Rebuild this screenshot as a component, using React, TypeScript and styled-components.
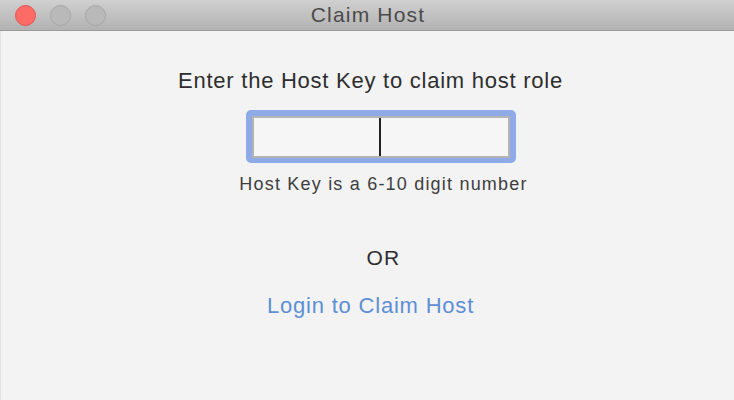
import React from "react";
import styled, { createGlobalStyle } from "styled-components";

const Global = createGlobalStyle`
  html, body { margin: 0; padding: 0; background: #f3f3f3; }
  body { font-family: "Liberation Sans", Arial, sans-serif; }
`;

const Window = styled.div`
  width: 734px;
  height: 400px;
  display: flex;
  flex-direction: column;
  background: #f3f3f3;
  overflow: hidden;
`;

const TitleBar = styled.div`
  height: 30px;
  flex: none;
  display: flex;
  align-items: center;
  position: relative;
  background: linear-gradient(#d0d0d0, #b2b2b2);
  border-bottom: 1px solid #9b9b9b;
`;

const Lights = styled.div`
  display: flex;
  gap: 14px;
  padding-left: 15px;
  position: relative;
  z-index: 1;
`;

const Light = styled.span<{ $color: string; $border: string }>`
  width: 21px;
  height: 21px;
  box-sizing: border-box;
  border-radius: 50%;
  background: ${(p) => p.$color};
  border: 1px solid ${(p) => p.$border};
`;

const Title = styled.div`
  position: absolute;
  inset: 0;
  display: flex;
  align-items: center;
  justify-content: center;
  font-size: 21px;
  letter-spacing: 1.2px;
  color: #4b4b4b;
  padding-left: 2px;
`;

const Body = styled.div`
  flex: 1;
  display: flex;
  flex-direction: column;
  align-items: center;
  padding-top: 36px;
  border-left: 1px solid #e2e2e2;
  padding-left: 6px;
`;

const Heading = styled.div`
  font-size: 22px;
  letter-spacing: 0.75px;
  line-height: 27px;
  color: #2e2e2e;
`;

const Ring = styled.div<{ $shift: number }>`
  margin-top: 16px;
  margin-left: ${(p) => p.$shift}px;
  width: 270px;
  height: 53px;
  box-sizing: border-box;
  border: 6px solid #8eabe7;
  border-bottom-width: 5px;
  border-radius: 5px;
  display: flex;
`;

const Field = styled.div`
  flex: 1;
  background: #f6f6f6;
  border: 2px solid #b4b4b4;
  display: flex;
  justify-content: center;
  align-items: center;
`;

const Caret = styled.span`
  width: 2px;
  height: 38px;
  background: #222;
  margin-left: -1px;
`;

const Help = styled.div<{ $shift: number }>`
  margin-top: 10px;
  margin-left: ${(p) => p.$shift}px;
  font-size: 18px;
  letter-spacing: 1.2px;
  line-height: 22px;
  color: #3e3e3e;
`;

const Or = styled.div<{ $shift: number }>`
  margin-top: 51px;
  margin-left: ${(p) => p.$shift}px;
  font-size: 21px;
  letter-spacing: 1.3px;
  line-height: 24px;
  color: #2e2e2e;
`;

const Link = styled.a`
  margin-top: 22px;
  font-size: 22px;
  letter-spacing: 0.8px;
  line-height: 27px;
  color: #5e8fd5;
  text-decoration: none;
  cursor: pointer;
`;

export default function App() {
  return (
    <>
      <Global />
      <Window>
        <TitleBar>
          <Lights>
            <Light $color="#fc6b66" $border="#e5524f" />
            <Light $color="#b9b9b9" $border="#a6a6a6" />
            <Light $color="#b9b9b9" $border="#a6a6a6" />
          </Lights>
          <Title>Claim Host</Title>
        </TitleBar>
        <Body>
          <Heading>Enter the Host Key to claim host role</Heading>
          <Ring $shift={20}>
            <Field>
              <Caret />
            </Field>
          </Ring>
          <Help $shift={26}>Host Key is a 6-10 digit number</Help>
          <Or $shift={26}>OR</Or>
          <Link>Login to Claim Host</Link>
        </Body>
      </Window>
    </>
  );
}
